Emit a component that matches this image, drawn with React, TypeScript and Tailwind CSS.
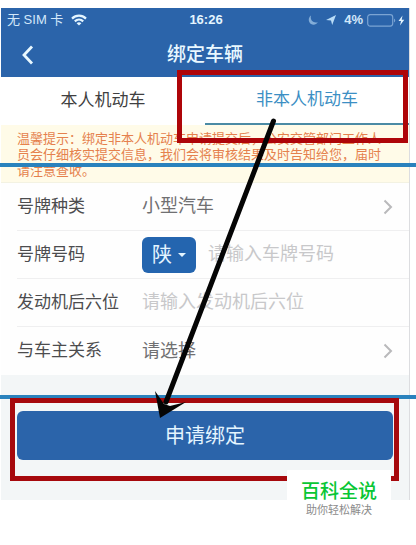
import type { ReactNode } from "react";

function Chevron() {
  return (
    <svg viewBox="0 0 10 16" className="w-[10px] h-4 flex-shrink-0" fill="none" stroke="#b9b9bb" strokeWidth="2">
      <path d="M1.5 1.5 L8 8 L1.5 14.5" />
    </svg>
  );
}

function Row({ id, label, children }: { id: string; label: string; children: ReactNode }) {
  return (
    <div className="ml-4 pr-4 h-12 flex items-center border-b border-[#efeff0] last:border-b-0">
      <label htmlFor={id} className="w-[125px] flex-shrink-0 text-[17px] text-[#4c4c4e]">
        {label}
      </label>
      {children}
    </div>
  );
}

function StatusBar() {
  return (
    <div className="h-6 pl-[6px] pr-1 grid grid-cols-[1fr_auto_1fr] items-center text-[13px] leading-6 text-[#d3e8fa]">
      <div className="flex items-center gap-2">
        <span>无 SIM 卡</span>
        <svg viewBox="0 0 16 12" className="w-4 h-3" fill="none" stroke="#e4f5ff" strokeWidth="2.2">
          <path d="M1 4.6 C5 0.6 11 0.6 15 4.6" />
          <path d="M3.8 7.4 C6.3 5.1 9.7 5.1 12.2 7.4" />
          <path d="M8 11.6 L5.6 9.2 C7 8 9 8 10.4 9.2 Z" fill="#e4f5ff" stroke="none" />
        </svg>
      </div>
      <span className="font-bold text-[#e4f5ff]">16:26</span>
      <div className="flex items-center justify-end">
        <svg viewBox="0 0 10 10" className="w-[10px] h-[10px] mr-2" fill="#83add8">
          <path d="M3 0.5 C0 2.5 0 7 3 9 C5.5 10.5 8.5 9.5 9.8 7.2 C5 8.5 1.8 5 3 0.5 Z" />
        </svg>
        <svg viewBox="0 0 10 10" className="w-[10px] h-[10px] mr-2" fill="#b9dcf7">
          <path d="M10 0 L6.2 10 L5 5.6 L0 5 Z" />
        </svg>
        <span className="font-bold">4%</span>
        <svg viewBox="0 0 38 13" className="w-[38px] h-[13px] ml-1">
          <rect x="0.7" y="0.7" width="25" height="11.4" rx="2.5" fill="none" stroke="#7ba4d3" strokeWidth="1.2" />
          <path d="M27 4.5 Q29.5 6.5 27 8.5 Z" fill="#7ba4d3" />
          <path d="M35.5 1.5 L31.5 7 H34 L33 11.5 L37.3 5.8 H34.7 Z" fill="#e4f5ff" />
        </svg>
      </div>
    </div>
  );
}

// Frames, lines and the arrow drawn over the form
function Marks() {
  return (
    <svg viewBox="0 0 416 545" className="absolute left-0 top-0 w-full pointer-events-none" fill="none">
      <path d="M0 165 H416 M0 397 H416" stroke="#2a82bd" strokeWidth="4" />
      <rect x="179.5" y="72.5" width="226" height="68" stroke="#ae0509" strokeWidth="5" />
      <rect x="12.5" y="400.5" width="384" height="78" stroke="#a6090d" strokeWidth="5" />
      <path d="M273.5 121 L166 402" stroke="#050505" strokeWidth="5" strokeLinecap="round" />
      <path d="M160 418 L155 391 L164 404 L170 406 L186 402 Z" fill="#050505" />
    </svg>
  );
}

export default function App() {
  return (
    <div className="relative min-h-screen bg-white pt-2 font-['Liberation_Sans','Noto_Sans_CJK_SC',sans-serif]">
      <div className="ml-px mr-[6px] border-r border-[#dcdde0] bg-[#f3f6f7]">
        {/* Header */}
        <header className="bg-[#2b64aa]">
          <StatusBar />
          <div className="h-[45px] px-5 grid grid-cols-[1fr_auto_1fr] items-center">
            <button type="button" aria-label="返回" className="w-4 h-5">
              <svg viewBox="0 0 16 20" className="w-4 h-5" fill="none" stroke="#e9f8ff" strokeWidth="2.8">
                <path d="M11 1.5 L3 10 L11 18.5" />
              </svg>
            </button>
            <h1 className="text-[19px] leading-6 font-medium text-[#e9f8ff]">绑定车辆</h1>
          </div>
        </header>

        {/* Tabs */}
        <nav className="h-12 grid grid-cols-2 bg-white text-[17px]">
          <button type="button" className="text-[#3f3f41]">本人机动车</button>
          <button type="button" className="border-b-2 border-[#4b8ba5] text-[#3c8fc4]">非本人机动车</button>
        </nav>

        <p className="h-[58px] pl-4 pr-6 pt-[6px] bg-[#fffbe8] border-b border-[#f3f2e2] text-[13px] leading-4 text-[#e5814d]">
          温馨提示：绑定非本人机动车申请提交后，公安交管部门工作人员会仔细核实提交信息，我们会将审核结果及时告知给您，届时请注意查收。
        </p>

        {/* Form */}
        <form>
          <div className="bg-[#fefefe]">
            <Row id="kind" label="号牌种类">
              <select id="kind" className="flex-1 min-w-0 appearance-none bg-transparent text-[18px] text-[#707072]">
                <option>小型汽车</option>
              </select>
              <Chevron />
            </Row>
            <Row id="plate" label="号牌号码">
              <button
                type="button"
                className="w-[54px] h-9 mr-3 flex-shrink-0 flex items-center justify-center gap-[6px] rounded-md bg-[#2465af] text-[20px] text-[#e4f5ff]"
              >
                陕
                <svg viewBox="0 0 8 4" className="w-2 h-1" fill="#e4f5ff">
                  <path d="M0 0 H8 L4 4 Z" />
                </svg>
              </button>
              <input
                id="plate"
                placeholder="请输入车牌号码"
                className="flex-1 min-w-0 bg-transparent text-[18px] placeholder:text-[#c8c8ca]"
              />
            </Row>
            <Row id="engine" label="发动机后六位">
              <input
                id="engine"
                placeholder="请输入发动机后六位"
                className="flex-1 min-w-0 bg-transparent text-[18px] placeholder:text-[#c8c8ca]"
              />
            </Row>
            <Row id="relation" label="与车主关系">
              <select id="relation" className="flex-1 min-w-0 appearance-none bg-transparent text-[18px] text-[#707072]">
                <option>请选择</option>
              </select>
              <Chevron />
            </Row>
          </div>
          <div className="px-4 pt-9 pb-10">
            <button type="button" className="w-full h-[49px] rounded-md bg-[#2b64aa] text-[20px] text-[#e4f5ff]">
              申请绑定
            </button>
          </div>
        </form>
      </div>

      <Marks />

      {/* Site badge */}
      <div className="absolute right-[25px] top-[470px] w-[104px] h-[50px] pt-[10px] bg-white text-center">
        <p className="text-[19px] leading-6 font-medium text-[#08c634]">百科全说</p>
        <p className="text-[11px] leading-3 text-[#8b8b8b]">助你轻松解决</p>
      </div>
    </div>
  );
}
